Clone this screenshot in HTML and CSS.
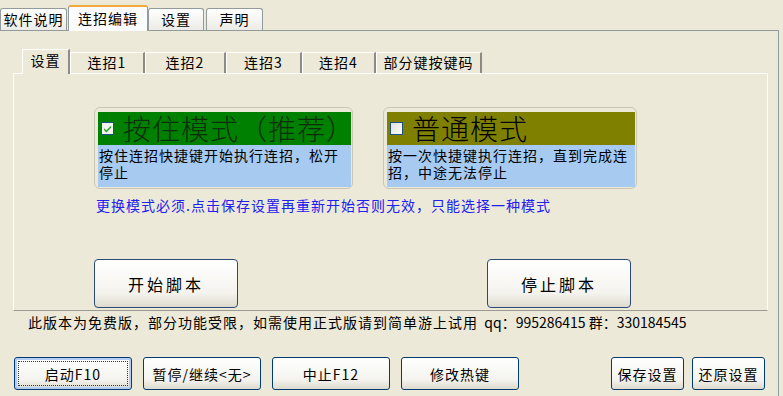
FILE: index.html
```html
<!DOCTYPE html>
<html lang="zh-CN">
 <head>
  <meta charset="utf-8">
  <title>连招编辑</title>
  <link rel="stylesheet" href="styles.css">
 </head>
 <body>
  <div class="tabbar">
	<div class="tab">软件说明</div>
	<div class="tab on">连招编辑</div>
	<div class="tab t3">设置</div>
	<div class="tab t4">声明</div>
  </div>
  <div class="panel">
	<div class="subtabs">
		<div class="stab on w1">设置</div>
		<div class="stab w2">连招1</div>
		<div class="stab w3">连招2</div>
		<div class="stab w4">连招3</div>
		<div class="stab w5">连招4</div>
		<div class="stab w6">部分键按键码</div>
	</div>
	<div class="subpanel">
		<div class="modes">
			<div class="mode m1">
				<div class="mode-head green">
					<span class="check">
						<svg width="13" height="13" viewBox="0 0 13 13"><rect x="0.5" y="0.5" width="12" height="12" fill="#f4f4f0" stroke="#1c5180"/><path d="M3 6.2 L5.3 8.6 L10 3.8 L10 5.8 L5.3 10.4 L3 8.1 Z" fill="#21a121"/></svg>
					</span>
					<span class="mode-title">按住模式（推荐）</span>
				</div>
				<div class="mode-desc">按住连招快捷键开始执行连招，松开停止</div>
			</div>
			<div class="mode m2">
				<div class="mode-head olive">
					<span class="check">
						<svg width="13" height="13" viewBox="0 0 13 13"><defs><linearGradient id="cb" x1="0" y1="0" x2="1" y2="1"><stop offset="0" stop-color="#dcdcd7"/><stop offset="1" stop-color="#ffffff"/></linearGradient></defs><rect x="0.5" y="0.5" width="12" height="12" fill="url(#cb)" stroke="#1c5180"/></svg>
					</span>
					<span class="mode-title">普通模式</span>
				</div>
				<div class="mode-desc">按一次快捷键执行连招，直到完成连招，中途无法停止</div>
			</div>
		</div>
		<p class="hint">更换模式必须.点击保存设置再重新开始否则无效，只能选择一种模式</p>
		<div class="actions">
			<button class="big">开始脚本</button>
			<button class="big">停止脚本</button>
		</div>
	</div>
	<p class="notice">此版本为免费版，部分功能受限，如需使用正式版请到简单游上试用<span class="nums">&nbsp; qq：995286415 群：330184545</span></p>
	<div class="toolbar">
		<button class="btn def">启动F10</button>
		<button class="btn">暂停/继续&lt;无&gt;</button>
		<button class="btn">中止F12</button>
		<button class="btn">修改热键</button>
		<button class="btn sm push">保存设置</button>
		<button class="btn sm">还原设置</button>
	</div>
  </div>
 </body>
</html>
```
FILE: styles.css
```css
*{margin:0;padding:0;box-sizing:border-box;}
body{
	width:783px;
	height:396px;
	overflow:hidden;
	background:#ece9d8;
	font-family:"Noto Sans CJK SC","Noto Sans",sans-serif;
	font-size:14px;
	letter-spacing:1px;
	color:#000;
}
/* top tabs */
.tabbar{
	height:30px;
	display:flex;
	align-items:flex-end;
}
.tab{
	height:22px;
	line-height:20px;
	width:67px;
	text-align:center;
	border:1px solid #919b9c;
	border-bottom:none;
	border-radius:3px 3px 0 0;
	background:linear-gradient(#ffffff,#ecebe6);
	margin-right:1px;
}
.tab.on{
	width:80px;
	height:26px;
	padding-top:1px;
	margin-bottom:-1px;
	margin-right:0;
	border-top:2px solid #f0a93a;
	background:#fcfcfe;
	position:relative;
	z-index:1;
}
.tab.t3{width:56px;margin-right:2px;}
.tab.t4{width:57px;}
.panel{
	width:779px;
	height:380px;
	border:1px solid #919b9c;
	border-left:none;
	padding-top:19px;
}
/* inner tabs */
.subtabs{
	display:flex;
	align-items:flex-end;
	height:23px;
	margin-left:22px;
}
.stab{
	height:21px;
	line-height:19px;
	text-align:center;
	border-top:1px solid #fff;
	border-left:1px solid #fff;
	border-right:2px solid #8d8c84;
}
.stab.on{
	height:25px;
	line-height:21px;
	margin-bottom:-1px;
	background:#ece9d8;
	position:relative;
	z-index:1;
}
.w1{width:48px;}
.w2{width:75px;}
.w3{width:81px;}
.w4{width:76px;}
.w5{width:74px;}
.w6{width:106px;}
.subpanel{
	margin-left:13px;
	width:755px;
	height:238px;
	border-top:1px solid #fff;
	border-left:1px solid #fff;
	border-right:1px solid #fff;
	border-bottom:1px solid #9a9a92;
}
.modes{
	display:flex;
	align-items:flex-end;
	margin-top:33px;
	padding-left:80px;
	gap:30px;
}
.mode{
	border:1px solid #c9c6b6;
	border-radius:6px;
	padding:4px 1px 1px 3px;
}
.m1{width:259px;}
.m2{width:254px;}
.mode-head{
	height:33px;
	display:flex;
	align-items:center;
	white-space:nowrap;
	padding-left:3px;
}
.green{background:#008000;color:#0c2e0c;overflow:hidden;}
.olive{background:#808000;color:#000;}
.check{
	display:flex;
	width:13px;
	height:13px;
}
.mode-title{
	font-size:28px;
	font-weight:300;
	letter-spacing:1px;
	margin-left:9px;
	line-height:33px;
}
.mode-desc{
	height:42px;
	background:#a6caf0;
	line-height:17px;
	padding:2px 0 0 1px;
}
.hint{
	margin-top:8px;
	padding-left:82px;
	line-height:16px;
	color:#2020f0;
}
.actions{
	display:flex;
	margin-top:46px;
	padding-left:80px;
	gap:249px;
}
.big{
	width:144px;
	height:49px;
	font-family:inherit;
	font-size:16px;
	letter-spacing:3px;
	border:1px solid #2c4a78;
	border-radius:4px;
	background:linear-gradient(#ffffff,#f4f3ee 70%,#dedbcd);
	color:#000;
}
.notice{
	margin-top:3px;
	padding-left:28px;
	line-height:16px;
}
.nums{letter-spacing:0;}
/* bottom buttons */
.toolbar{
	display:flex;
	margin-top:27px;
	padding-left:14px;
	padding-right:13px;
	gap:11px;
}
.btn{
	width:118px;
	height:33px;
	font-family:inherit;
	font-size:14px;
	letter-spacing:1px;
	border:1px solid #003c74;
	border-radius:3px;
	background:linear-gradient(#ffffff,#f4f3ee 70%,#dedbcd);
	color:#000;
}
.btn.def{
	box-shadow:inset 0 0 0 2px #b5cdf2;
	outline:1px dotted #333;
	outline-offset:-5px;
}
.btn.sm{width:73px;}
.push{margin-left:auto;margin-right:-3px;}
```
